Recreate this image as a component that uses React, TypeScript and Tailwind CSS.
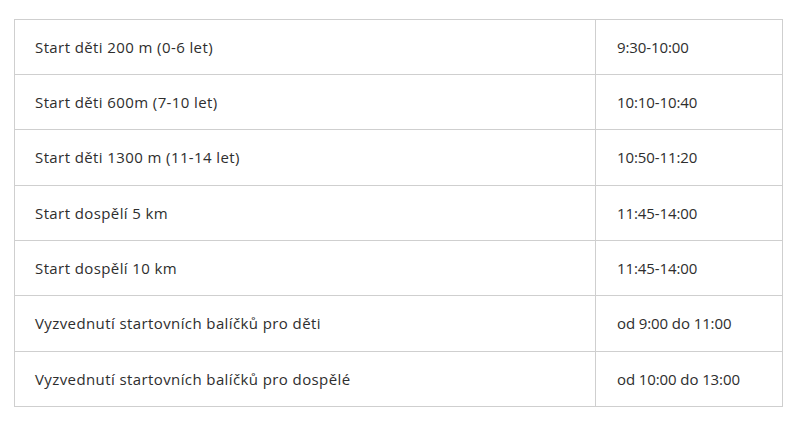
import React from "react";

const rows: [string, string][] = [
  ["Start děti 200 m (0-6 let)", "9:30-10:00"],
  ["Start děti 600m (7-10 let)", "10:10-10:40"],
  ["Start děti 1300 m (11-14 let)", "10:50-11:20"],
  ["Start dospělí 5 km", "11:45-14:00"],
  ["Start dospělí 10 km", "11:45-14:00"],
  ["Vyzvednutí startovních balíčků pro děti", "od 9:00 do 11:00"],
  ["Vyzvednutí startovních balíčků pro dospělé", "od 10:00 do 13:00"],
];

export default function App() {
  return (
    <div
      className="w-[800px] h-[445px] bg-white pt-[19px] pl-[14px]"
      style={{ fontFamily: '"Open Sans", "Liberation Sans", sans-serif' }}
    >
      <table className="border-collapse w-[769px] text-[15px] text-[#2e2e2e]">
        <tbody>
          {rows.map(([a, b], i) => (
            <tr key={i} className={i % 3 === 2 ? "h-[56px]" : "h-[55px]"}>
              <td className="border border-[#cfcfcf] pl-[20px] w-[581px] tracking-[0.4px]">{a}</td>
              <td className="border border-[#cfcfcf] pl-[21px] tracking-[-0.1px]">{b}</td>
            </tr>
          ))}
        </tbody>
      </table>
    </div>
  );
}
